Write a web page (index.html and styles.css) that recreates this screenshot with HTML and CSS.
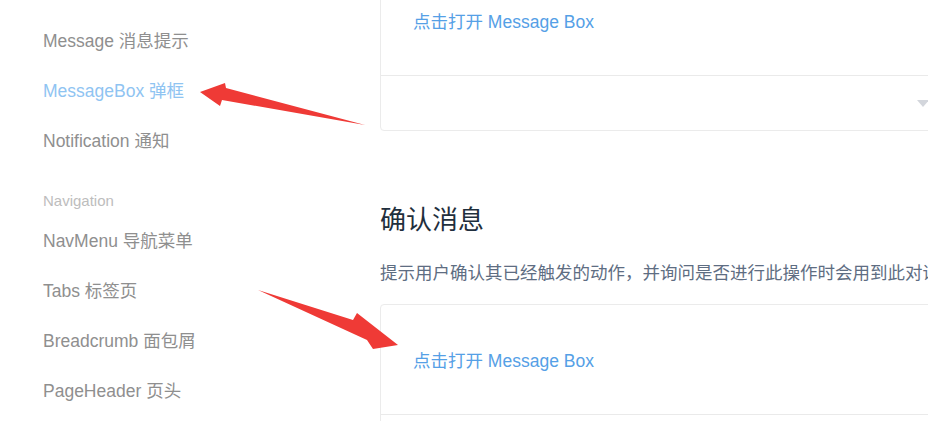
FILE: index.html
```html
<!DOCTYPE html>
<html lang="zh-CN">
<head>
<meta charset="utf-8">
<title>MessageBox 弹框</title>
<link rel="stylesheet" href="styles.css">
</head>
<body>
<div class="page">
  <aside class="sidebar">
    <ul class="nav">
      <li class="group-title cut">Notice</li>
      <li class="item">Message 消息提示</li>
      <li class="item active">MessageBox 弹框</li>
      <li class="item">Notification 通知</li>
      <li class="group-title">Navigation</li>
      <li class="item">NavMenu 导航菜单</li>
      <li class="item">Tabs 标签页</li>
      <li class="item">Breadcrumb 面包屑</li>
      <li class="item">PageHeader 页头</li>
    </ul>
  </aside>
  <main class="main">
    <div class="demo-block first">
      <div class="source"><span class="link">点击打开 Message Box</span></div>
      <div class="control"><span class="caret"></span></div>
    </div>
    <h3 class="title">确认消息</h3>
    <p class="desc">提示用户确认其已经触发的动作，并询问是否进行此操作时会用到此对话框。调用 $confirm 方法即可打开消息提示，它模拟了系统的 confirm。</p>
    <div class="demo-block">
      <div class="source"><span class="link">点击打开 Message Box</span></div>
      <div class="control"><span class="caret"></span></div>
    </div>
  </main>
  <svg class="arrows" width="928" height="421" viewBox="0 0 928 421" aria-hidden="true">
    <polygon points="200,92 225,83 226,88 365,125 222,100 220,106" fill="#ef3a36"/>
    <polygon points="258,290 353,320 357,313 398,345 373,349 367,340" fill="#ef3a36"/>
  </svg>
</div>
</body>
</html>
```

FILE: styles.css
```css
html, body {
  margin: 0;
  padding: 0;
  background: #ffffff;
}
body {
  width: 928px;
  height: 421px;
  overflow: hidden;
  font-family: "Liberation Sans", "Noto Sans CJK SC", sans-serif;
}
.page {
  position: relative;
  display: flex;
  width: 928px;
  height: 421px;
}
.sidebar {
  flex: 0 0 380px;
  width: 380px;
}
.nav {
  list-style: none;
  margin: -34px 0 0 0;
  padding: 0 0 0 43px;
}
.item {
  height: 50px;
  line-height: 50px;
  font-size: 17.5px;
  color: #8f8f8f;
  white-space: nowrap;
}
.item.active {
  color: #8fc4f2;
}
.group-title {
  padding-top: 20px;
  height: 30px;
  line-height: 30px;
  font-size: 15px;
  color: #bdbdbd;
}
.group-title.cut {
  padding-top: 11px;
  height: 39px;
}
.main {
  flex: 0 0 1086px;
  width: 1086px;
  margin-top: -35px;
}
.demo-block {
  border: 1px solid #ebebeb;
  border-radius: 4px;
}
.source {
  height: 109px;
  display: flex;
  align-items: center;
  padding: 0 32px;
  border-bottom: 1px solid #eaeaea;
}
.link {
  font-size: 17.5px;
  color: #55a0e6;
}
.control {
  height: 54px;
  display: flex;
  align-items: center;
  justify-content: center;
}
.caret {
  width: 0;
  height: 0;
  border-left: 6px solid transparent;
  border-right: 6px solid transparent;
  border-top: 7px solid #d3d6dc;
}
.title {
  margin: 71px 0 0 0;
  font-size: 26px;
  line-height: 36px;
  font-weight: normal;
  color: #1f2f3d;
}
.desc {
  margin: 22px 0 18px 0;
  font-size: 17.5px;
  line-height: 26px;
  color: #5e6d82;
  white-space: nowrap;
}
.arrows {
  position: absolute;
  left: 0;
  top: 0;
  pointer-events: none;
}
```
